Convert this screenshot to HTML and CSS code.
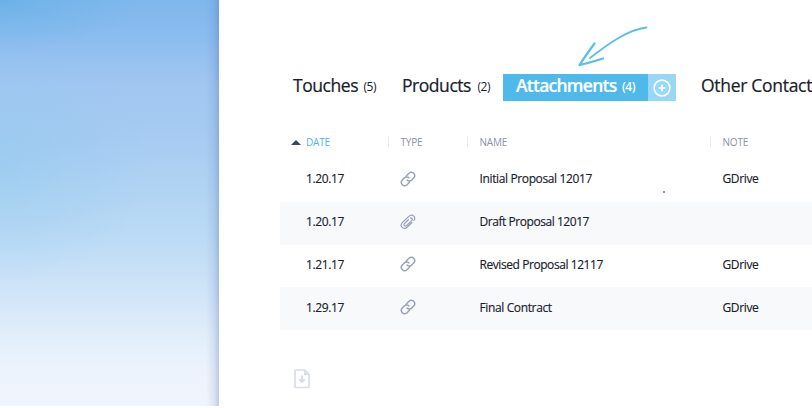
FILE: index.html
```html
<!DOCTYPE html>
<html lang="en">
<head>
<meta charset="utf-8">
<title>Attachments</title>
<link rel="stylesheet" href="styles.css">
</head>
<body>
<svg class="defs" width="0" height="0" aria-hidden="true">
  <symbol id="link" viewBox="0 0 24 24"><path d="M10 13a5 5 0 0 0 7.540.540l3-3a5 5 0 0 0-7.070-7.070l-3 3a5 5 0 0 0-1.200 2.300M14 11a5 5 0 0 0-7.540-.540l-3 3a5 5 0 0 0 7.070 7.070l3-3a5 5 0 0 0 1.200-2.300"/></symbol>
  <symbol id="clip" viewBox="0 0 16 16"><path d="M12.200 8.300 7.400 13C3.500 16.600-1 12 2.500 8.400L8.600 2.600C12.300-.700 17 3.200 13.600 6.800M8.800 5.300 4.600 9.400c-1.600 1.800.500 3.500 2.100 2.100l5-4.900c1.500-1.600-.200-3.200-1.700-2.300"/></symbol>
</svg>
<div class="page">
  <aside class="sky"></aside>
  <main class="content">
    <svg class="arrow" viewBox="0 0 76 46"><path d="M71.500 4.500C53 6.500 33 21 15 35"/><path class="head" d="M19.500 20.500C14 28 9 35 4.500 42C12 40.500 20 38 28 35.500"/></svg>
    <nav class="tabs">
      <a class="tab touches"><span class="label">Touches</span><span class="count">(5)</span></a>
      <a class="tab products"><span class="label">Products</span><span class="count">(2)</span></a>
      <div class="active">
        <a class="tab"><span class="label">Attachments</span><span class="count">(4)</span></a>
        <button class="add" aria-label="Add"><svg viewBox="0 0 18 18"><circle cx="9" cy="9" r="7.900"/><path d="M9 5.600v6.800M5.600 9h6.800"/></svg></button>
      </div>
      <a class="tab other"><span class="label">Other Contact</span></a>
    </nav>
    <section class="table">
      <div class="row header">
        <span class="date"><i class="sort"></i>DATE</span><span class="divided">TYPE</span><span class="divided">NAME</span><span class="divided">NOTE</span>
      </div>
      <div class="row"><span>1.20.17</span><svg class="icon"><use href="#link"/></svg><span>Initial Proposal 12017</span><span>GDrive</span></div>
      <div class="row"><span>1.20.17</span><svg class="icon clip"><use href="#clip"/></svg><span class="draft">Draft Proposal 12017</span><span></span></div>
      <div class="row"><span>1.21.17</span><svg class="icon"><use href="#link"/></svg><span class="revised">Revised Proposal 12117</span><span>GDrive</span></div>
      <div class="row"><span>1.29.17</span><svg class="icon"><use href="#link"/></svg><span>Final Contract</span><span>GDrive</span></div>
      <i class="dot"></i>
    </section>
    <svg class="download" viewBox="0 0 16 20"><path d="M2 1h9l4 4v12.500q0 1-1 1H2q-1 0-1-1V2q0-1 1-1z"/><path class="fold" d="M10 1v5h5z"/><path class="down" d="M8 6.500v6M5.300 10.200 8 12.900l2.700-2.700"/></svg>
  </main>
</div>
</body>
</html>
```
FILE: styles.css
```css
* { box-sizing: border-box; }
body { margin: 0; background: #fff; font-family: "Open Sans", sans-serif; color: #18202b; overflow: hidden; }
.defs { position: absolute; }
.page { display: flex; width: 812px; height: 408px; overflow: hidden; }
.sky {
  flex: 0 0 219px; height: 406px;
  background:
    linear-gradient(to left, rgba(75,105,180,.3), rgba(75,105,180,.12) 5px, transparent 13px),
    radial-gradient(ellipse 150px 120px at 0 165px, rgba(135,200,236,.4), rgba(135,200,236,.2) 45%, transparent),
    radial-gradient(ellipse 140px 50px at 0 0, rgba(95,175,228,.6), rgba(95,175,228,.25) 50%, transparent),
    linear-gradient(#7fb7ec 0, #8abcef 35px, #a1c7f1 85px, #a7cbf2 140px, #afd2f3 180px, #bbdaf5 235px, #cfe4f8 290px, #e3effa 340px, #edf3fc 375px, #f1f5fd 406px);
}
.content { position: relative; flex: 1; min-width: 0; padding: 74px 0 0 61px; }
.arrow { position: absolute; left: 356px; top: 23px; width: 76px; height: 46px; fill: none; stroke: #5bbfea; stroke-width: 1.900; stroke-linecap: round; stroke-linejoin: round; }
.arrow .head { stroke-width: 2.300; }
.tabs { display: flex; height: 27px; padding-left: 13px; white-space: nowrap; }
.tabs > * { flex-shrink: 0; }
.tab { display: flex; justify-content: space-between; height: 27px; line-height: 23px; }
.label { font-size: 17.500px; letter-spacing: -.45px; -webkit-text-stroke: .2px; }
.count { font-size: 12px; line-height: 25px; letter-spacing: -.5px; }
.touches { width: 83px; }
.products { width: 88px; margin-left: 26px; }
.active { display: flex; width: 173px; margin-left: 13px; background: #4fb9e9; color: #fff; }
.active .tab { width: 145px; padding: 0 13px; font-weight: 600; }
.active .label { letter-spacing: -.75px; }
.add { width: 28px; padding: 5px; border: 0; background: #98d7f5; }
.add svg { display: block; width: 18px; height: 18px; fill: none; stroke: #fff; stroke-width: 1.600; }
.other { margin-left: 25px; }
.other .label { letter-spacing: -.3px; }
.table { position: relative; margin-top: 24px; font-size: 12px; letter-spacing: -.37px; -webkit-text-stroke: .15px; }
.row { display: grid; grid-template-columns: 94.500px 79px 243px 1fr; align-items: center; height: 42.750px; padding: 0 0 3px 26px; white-space: nowrap; }
.row:nth-child(odd):not(.header) { background: #f8f9fb; }
.header { height: 34px; padding-bottom: 0; align-items: start; line-height: 34px; font-size: 10px; letter-spacing: -.2px; color: #8a93a3; -webkit-text-stroke: 0; }
.draft { letter-spacing: -.45px; }
.revised { letter-spacing: -.43px; }
.date { color: #4fb3e8; position: relative; }
.sort { position: absolute; left: -15px; top: 15px; border: 5px solid transparent; border-top: 0; border-bottom: 5px solid #3b4658; }
.divided { position: relative; }
.divided::before { content: ""; position: absolute; left: -13px; top: 12px; width: 1px; height: 10px; background: #e2edf0; }
.icon { width: 16px; height: 16px; margin-left: -1px; fill: none; stroke: #98a1b5; stroke-width: 2.200; }
.clip { stroke-width: 1.200; }
.dot { position: absolute; left: 383px; top: 66px; width: 2px; height: 2px; background: #9298a3; }
.download { display: block; width: 16px; height: 20px; margin: 39px 0 0 14px; fill: none; stroke: #d9dde6; stroke-width: 1.700; }
.download .fold { fill: #d9dde6; stroke: none; }
.download .down { stroke-width: 2; }
```
